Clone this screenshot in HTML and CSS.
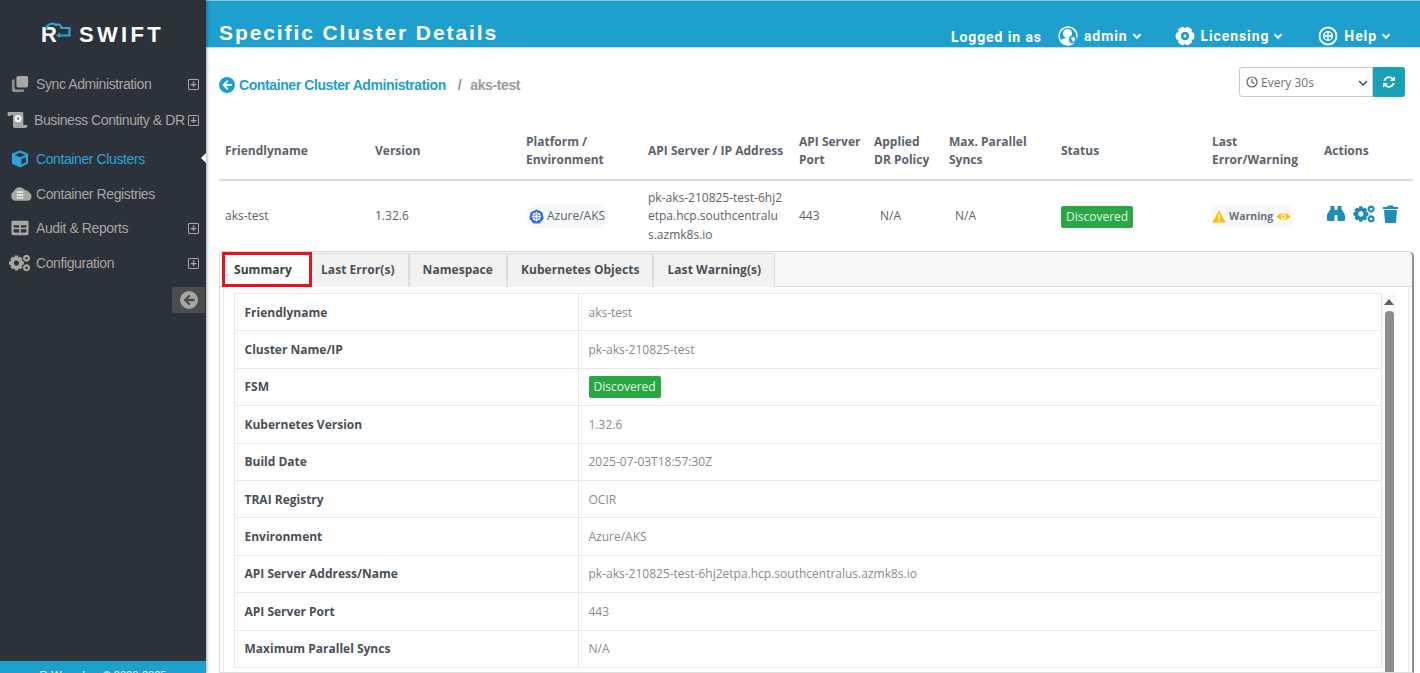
FILE: index.html
```html
<!DOCTYPE html>
<html lang="en">
<head>
    <meta charset="UTF-8">
    <title>Specific Cluster Details</title>
    <link rel="stylesheet" href="styles.css">
</head>
<body>
<div class="app">
    <aside class="sidebar">
        <div class="logo">
            <span class="logo-r">R</span>
            <svg class="logo-cloud" width="26" height="16" viewBox="0 0 26 16"><path d="M1 7 C2 2 8 0 11 3 C13 1.500 16 3 16.500 6 L24.500 6 V13.500 H13" fill="none" stroke="#2ba4d6" stroke-width="2.200"/><path d="M11 13.500 L15 10.500 V16 Z" fill="#2ba4d6"/></svg>
            <span class="logo-text">SWIFT</span>
        </div>
        <nav class="nav">
            <div class="nav-item nav-sync">
                <svg class="nav-icon" viewBox="0 0 20 20"><rect x="6" y="1" width="13" height="13" rx="2" fill="#a8a6a0"/><path d="M4 5 H2.500 A1.500 1.500 0 0 0 1 6.500 V17 A2 2 0 0 0 3 19 H13 A1.500 1.500 0 0 0 14.500 17.500 V16 H6 A2 2 0 0 1 4 14 Z" fill="#8f8d88"/></svg>
                <span class="nav-label">Sync Administration</span>
                <span class="plus">+</span>
            </div>
            <div class="nav-item nav-bc">
                <svg class="nav-icon wide" viewBox="0 0 22 20"><path d="M1 1 H16 A1.500 1.500 0 0 1 17.500 2.500 V15.500 H22 V17 A2 2 0 0 1 20 19 H8 A2 2 0 0 1 6 17 V4.500 H3.500 V5.500 H1 A1 1 0 0 1 0 4.500 V2 A1 1 0 0 1 1 1 Z" fill="#a8a6a0"/><circle cx="11.700" cy="8.500" r="4" fill="#f2f1ee"/><circle cx="11.700" cy="8.500" r="1.500" fill="#8f8d88"/></svg>
                <span class="nav-label">Business Continuity &amp; DR</span>
                <span class="plus">+</span>
            </div>
            <div class="nav-item nav-active nav-cc">
                <svg class="nav-icon" viewBox="0 0 20 20"><path d="M10 0.500 L19 4 V15 L10 19.500 L1 15 V4 Z" fill="#2ba4d6"/><path d="M4 5.500 L10 3 L16 5.500 L10 8 Z" fill="#2b323a"/><path d="M11.500 10 L16.500 8 V13.500 L11.500 16 Z" fill="#2b323a"/></svg>
                <span class="nav-label">Container Clusters</span>
                <span class="caret"></span>
            </div>
            <div class="nav-item nav-cr">
                <svg class="nav-icon cloud" viewBox="0 0 24 16"><path d="M6 15 H19 A4.500 4.500 0 0 0 21 6.500 A4 4 0 0 0 17 4 A7 7 0 0 0 5 5 A5.500 5.500 0 0 0 6 15 Z" fill="#a8a6a0"/><path d="M8 5 H15 V7 H8 Z M8 8 H15 V10 H8 Z M8 11 H15 V13 H8 Z" fill="#e6e4df"/></svg>
                <span class="nav-label">Container Registries</span>
            </div>
            <div class="nav-item nav-ar">
                <svg class="nav-icon" viewBox="0 0 20 18"><path fill-rule="evenodd" d="M2 1 H18 A1.500 1.500 0 0 1 19.500 2.500 V15.500 A1.500 1.500 0 0 1 18 17 H2 A1.500 1.500 0 0 1 0.500 15.500 V2.500 A1.500 1.500 0 0 1 2 1 Z M3 6 V8.500 H9 V6 Z M11 6 V8.500 H17 V6 Z M3 10.500 V14 H9 V10.500 Z M11 10.500 V14 H17 V10.500 Z" fill="#a8a6a0"/></svg>
                <span class="nav-label">Audit &amp; Reports</span>
                <span class="plus">+</span>
            </div>
            <div class="nav-item nav-cf">
                <svg class="nav-icon wide" viewBox="0 0 24 20"><use href="#gears" fill="#a8a6a0"/></svg>
                <span class="nav-label">Configuration</span>
                <span class="plus">+</span>
            </div>
        </nav>
        <div class="collapse-row">
            <div class="collapse-btn">
                <svg width="18" height="18" viewBox="0 0 18 18"><use href="#back-circle" fill="#a8a6a0"/></svg>
            </div>
        </div>
        <footer class="side-foot">R-Wave Inc. © 2020-2025</footer>
    </aside>

    <main class="main">
        <header class="topbar">
            <h1 class="page-title">Specific Cluster Details</h1>
            <div class="top-links">
                <span class="logged">Logged in as</span>
                <span class="top-link link-admin">
                    <svg width="20" height="20" viewBox="0 0 20 20"><circle cx="10" cy="10" r="9" fill="none" stroke="#fff" stroke-width="1.500"/><circle cx="9.500" cy="7.500" r="4.500" fill="#fff"/><path d="M2.500 15 C4 11.500 12 11 15 12.500 V18 H5 Z" fill="#fff"/><circle cx="15" cy="13.500" r="4" fill="#1da0ce"/><path d="M13 11.800 L15 11 L17 11.800 V14 C17 15 16 15.800 15 16.200 Z" fill="#fff"/></svg>
                    admin <span class="chev"></span>
                </span>
                <span class="top-link link-lic">
                    <svg width="20" height="20" viewBox="0 0 20 20"><circle cx="10" cy="10" r="9.500" fill="#fff"/><circle cx="10" cy="10" r="4.200" fill="#1da0ce"/><circle cx="10" cy="10" r="1.500" fill="#fff"/><g fill="#1da0ce"><circle cx="10" cy="0.500" r="1.600"/><circle cx="18.200" cy="5.200" r="1.600"/><circle cx="18.200" cy="14.800" r="1.600"/><circle cx="10" cy="19.500" r="1.600"/><circle cx="1.800" cy="14.800" r="1.600"/><circle cx="1.800" cy="5.200" r="1.600"/></g></svg>
                    Licensing <span class="chev"></span>
                </span>
                <span class="top-link link-help">
                    <svg width="20" height="20" viewBox="0 0 20 20"><circle cx="10" cy="10" r="8.500" fill="none" stroke="#fff" stroke-width="1.800"/><circle cx="10" cy="10" r="4.300" fill="none" stroke="#fff" stroke-width="1.500"/><path d="M10 5.500 V14.500 M5.500 10 H14.500" stroke="#fff" stroke-width="1.300"/></svg>
                    Help <span class="chev"></span>
                </span>
            </div>
        </header>

        <div class="crumb-row">
            <div class="crumbs">
                <svg width="16" height="16" viewBox="0 0 18 18"><use href="#back-circle" fill="#1da0ce"/></svg>
                <a class="crumb-link">Container Cluster Administration</a>
                <span class="crumb-sep">/</span>
                <span class="crumb-current">aks-test</span>
            </div>
            <div class="refresh">
                <div class="refresh-select">
                    <svg width="12" height="12" viewBox="0 0 12 12"><circle cx="6" cy="6" r="5" fill="none" stroke="#5f666d" stroke-width="1.200"/><path d="M6 3 V6.300 L8.200 7.500" fill="none" stroke="#5f666d" stroke-width="1.200"/></svg>
                    <span>Every 30s</span>
                    <svg class="select-arrow" width="10" height="6" viewBox="0 0 10 6"><path d="M1 1 L5 5 L9 1" fill="none" stroke="#4a5056" stroke-width="1.500"/></svg>
                </div>
                <button class="refresh-btn">
                    <svg width="14" height="14" viewBox="0 0 14 14"><path d="M1.500 6 A5.500 5.500 0 0 1 11 3 L12.800 1.200 V6 H8 L9.800 4.200 A3.800 3.800 0 0 0 3.400 6 Z M12.500 8 A5.500 5.500 0 0 1 3 11 L1.200 12.800 V8 H6 L4.200 9.800 A3.800 3.800 0 0 0 10.600 8 Z" fill="#fff"/></svg>
                </button>
            </div>
        </div>

        <table class="clusters">
            <thead>
                <tr>
                    <th class="c-name">Friendlyname</th>
                    <th class="c-ver">Version</th>
                    <th class="c-plat">Platform / Environment</th>
                    <th class="c-api">API Server / IP Address</th>
                    <th class="c-port">API Server Port</th>
                    <th class="c-dr">Applied DR Policy</th>
                    <th class="c-sync">Max. Parallel Syncs</th>
                    <th class="c-status">Status</th>
                    <th class="c-last">Last Error/Warning</th>
                    <th class="c-act">Actions</th>
                </tr>
            </thead>
            <tbody>
                <tr>
                    <td>aks-test</td>
                    <td>1.32.6</td>
                    <td>
                        <span class="platform">
                            <svg width="15" height="15" viewBox="0 0 16 16"><path d="M8 0.500 L14.200 3.500 L15.700 10.200 L11.400 15.500 H4.600 L0.300 10.200 L1.800 3.500 Z" fill="#326de6"/><circle cx="8" cy="8" r="3.800" fill="none" stroke="#fff" stroke-width="1.200"/><path d="M8 2.800 V13.200 M3 8 H13 M4.500 4.500 L11.500 11.500 M11.500 4.500 L4.500 11.500" stroke="#fff" stroke-width="0.900"/></svg>
                            Azure/AKS
                        </span>
                    </td>
                    <td class="api-cell">pk-aks-210825-test-6hj2etpa.hcp.southcentralus.azmk8s.io</td>
                    <td>443</td>
                    <td class="na">N/A</td>
                    <td class="na">N/A</td>
                    <td><span class="badge">Discovered</span></td>
                    <td>
                        <span class="warning">
                            <svg width="14" height="13" viewBox="0 0 14 13"><path d="M7 0.500 L13.800 12.500 H0.200 Z" fill="#ffc107"/><path d="M6.300 4.500 H7.700 V8.800 H6.300 Z M6.300 9.700 H7.700 V11 H6.300 Z" fill="#fff"/></svg>
                            <b>Warning</b>
                            <svg class="eye" width="15" height="11" viewBox="0 0 15 11"><path d="M0.500 5.500 C3 1 12 1 14.500 5.500 C12 10 3 10 0.500 5.500 Z" fill="#ffc107"/><circle cx="7.500" cy="5.500" r="2.600" fill="#fff"/><circle cx="7.500" cy="5.500" r="1.500" fill="#ffc107"/></svg>
                        </span>
                    </td>
                    <td>
                        <span class="actions">
                            <svg width="18" height="17" viewBox="0 0 18 17"><path d="M3.500 1 H7.500 V5 H10.500 V1 H14.500 V4 C15 6 18 8 18 11 V15 A1 1 0 0 1 17 16 H10.500 V10 H7.500 V16 H1 A1 1 0 0 1 0 15 V11 C0 8 3 6 3.500 4 Z" fill="#1c8dbb"/></svg>
                            <svg width="22" height="18" viewBox="0 0 24 20"><use href="#gears" fill="#1c8dbb"/></svg>
                            <svg width="15" height="18" viewBox="0 0 15 18"><path d="M5 0.500 H10 L11 2 H15 V4 H0 V2 H4 Z M1 5 H14 L13 17 A1 1 0 0 1 12 18 H3 A1 1 0 0 1 2 17 Z" fill="#1c8dbb"/></svg>
                        </span>
                    </td>
                </tr>
            </tbody>
        </table>

        <section class="panel">
            <div class="tabs">
                <span class="tab tab-active">Summary</span>
                <span class="tab">Last Error(s)</span>
                <span class="tab">Namespace</span>
                <span class="tab">Kubernetes Objects</span>
                <span class="tab">Last Warning(s)</span>
            </div>
            <div class="panel-body">
                <div class="summary-scroll">
                    <table class="summary">
                        <tr><th>Friendlyname</th><td>aks-test</td></tr>
                        <tr><th>Cluster Name/IP</th><td>pk-aks-210825-test</td></tr>
                        <tr><th>FSM</th><td><span class="badge">Discovered</span></td></tr>
                        <tr><th>Kubernetes Version</th><td>1.32.6</td></tr>
                        <tr><th>Build Date</th><td>2025-07-03T18:57:30Z</td></tr>
                        <tr><th>TRAI Registry</th><td>OCIR</td></tr>
                        <tr><th>Environment</th><td>Azure/AKS</td></tr>
                        <tr><th>API Server Address/Name</th><td>pk-aks-210825-test-6hj2etpa.hcp.southcentralus.azmk8s.io</td></tr>
                        <tr><th>API Server Port</th><td>443</td></tr>
                        <tr><th>Maximum Parallel Syncs</th><td>N/A</td></tr>
                    </table>
                </div>
                <div class="scrollbar">
                    <span class="scroll-up"></span>
                    <span class="scroll-thumb"></span>
                </div>
            </div>
        </section>
    </main>
</div>

<svg class="defs" width="0" height="0">
    <defs>
        <symbol id="back-circle" viewBox="0 0 18 18">
            <path fill-rule="evenodd" d="M9 0 A9 9 0 1 1 9 18 A9 9 0 1 1 9 0 Z M9.200 3.500 L3.700 9 L9.200 14.500 L10.700 13 L7.800 10.200 H14.500 V7.800 H7.800 L10.700 5 Z"/>
        </symbol>
        <symbol id="gears" viewBox="0 0 24 20">
            <path fill-rule="evenodd" d="M6.800 1.500 H10.200 L10.800 3.800 L13 2.900 L15.500 5.300 L14.500 7.500 L17 8.200 V11.800 L14.500 12.500 L15.500 14.700 L13 17.100 L10.800 16.200 L10.200 18.500 H6.800 L6.200 16.200 L4 17.100 L1.500 14.700 L2.500 12.500 L0 11.800 V8.200 L2.500 7.500 L1.500 5.300 L4 2.900 L6.200 3.800 Z M8.500 7 A3 3 0 1 0 8.501 7 Z"/>
            <path fill-rule="evenodd" d="M20 0.500 A4 4 0 1 1 19.999 0.500 Z M20 3 A1.500 1.500 0 1 0 20.001 3 Z M20 11.500 A4 4 0 1 1 19.999 11.500 Z M20 14 A1.500 1.500 0 1 0 20.001 14 Z"/>
        </symbol>
    </defs>
</svg>
</body>
</html>
```

FILE: styles.css
```css
* {
    box-sizing: border-box;
}
html, body {
    height: 100%;
}
body {
    margin: 0;
    overflow: hidden;
    font-family: "Open Sans", sans-serif;
    font-size: 12px;
    color: #5c636a;
    background-color: #fff;
}
.defs {
    position: absolute;
}
.app {
    display: flex;
    height: 673px;
    overflow: hidden;
}

/* sidebar */
.sidebar {
    width: 206px;
    flex-shrink: 0;
    display: flex;
    flex-direction: column;
    background-color: #2b323a;
    box-shadow: 1px 0 3px rgba(0,0,0,0.35);
    font-family: "Liberation Sans", Arial, sans-serif;
    position: relative;
    z-index: 2;
}
.logo {
    height: 66px;
    padding: 3px 0 0 41px;
    display: flex;
    align-items: center;
    color: #fff;
    font-weight: bold;
    font-size: 22px;
}
.logo-r {
    width: 15px;
}
.logo-cloud {
    margin: -10px 0 0 -11px;
    flex-shrink: 0;
}
.logo-text {
    margin-left: 8px;
    letter-spacing: 3.300px;
}
.nav-item {
    display: flex;
    align-items: center;
    height: 35px;
    padding-left: 11px;
    font-size: 14px;
    letter-spacing: -0.4px;
    color: #a8a6a0;
    position: relative;
}
.nav-bc {
    margin-top: 1px;
    padding-left: 7px;
}
.nav-cc {
    margin-top: 4px;
}
.nav-ar {
    margin-top: -1px;
}
.nav-icon {
    width: 18px;
    height: 18px;
    margin-right: 7px;
    flex-shrink: 0;
}
.nav-icon.wide {
    width: 21px;
    margin-left: -2px;
    margin-right: 6px;
}
.nav-icon.cloud {
    width: 23px;
    margin-left: -2px;
    margin-right: 4px;
}
.nav-bc .nav-icon.wide {
    margin-left: 0;
}
.nav-active {
    color: #2ba4d6;
}
.plus {
    position: absolute;
    right: 7px;
    top: 13px;
    width: 11px;
    height: 11px;
    border: 1px solid #a8a6a0;
    border-radius: 1px;
    font-size: 11px;
    line-height: 9px;
    text-align: center;
    letter-spacing: 0;
    font-weight: bold;
}
.caret {
    position: absolute;
    right: 0;
    top: 12px;
    border-top: 5px solid transparent;
    border-bottom: 5px solid transparent;
    border-right: 5px solid #fff;
}
.collapse-row {
    display: flex;
    justify-content: flex-end;
    margin-top: 7px;
    padding-right: 1px;
}
.collapse-btn {
    width: 33px;
    height: 26px;
    background-color: #4a4d50;
    border-radius: 4px 0 0 4px;
    display: flex;
    align-items: center;
    justify-content: center;
}
.side-foot {
    margin-top: auto;
    height: 12px;
    padding-top: 7px;
    background-color: #1da0ce;
    color: #e8f4f9;
    font-size: 11px;
    line-height: 14px;
    text-align: center;
    overflow: hidden;
}

/* main */
.main {
    flex: 1;
    min-width: 0;
    display: flex;
    flex-direction: column;
}
.topbar {
    height: 48px;
    flex-shrink: 0;
    display: flex;
    align-items: flex-end;
    justify-content: space-between;
    background-color: #1da0ce;
    border-top: 1px solid #8fc3cf;
    border-bottom: 1px solid #bfe0ec;
    padding: 0 31px 1px 13px;
    color: #fff;
}
.page-title {
    margin: 0;
    font-family: "Liberation Sans", Arial, sans-serif;
    font-size: 21px;
    line-height: 27px;
    font-weight: bold;
    letter-spacing: 1.9px;
}
.top-links {
    display: flex;
    align-items: center;
    height: 20px;
    font-family: Roboto, sans-serif;
    font-weight: 700;
    font-size: 14px;
    letter-spacing: 0.9px;
}
.logged {
    margin: 1px 16px 0 0;
}
.top-link {
    display: flex;
    align-items: center;
    gap: 6px;
}
.link-lic {
    margin-left: 35px;
}
.link-help {
    margin-left: 37px;
}
.chev {
    width: 6px;
    height: 6px;
    border-right: 2px solid #fff;
    border-bottom: 2px solid #fff;
    transform: rotate(45deg);
    margin: -3px 0 0 0;
}

.crumb-row {
    height: 63px;
    flex-shrink: 0;
    display: flex;
    align-items: flex-start;
    justify-content: space-between;
    padding: 19px 15px 0 13px;
}
.crumbs {
    display: flex;
    align-items: center;
    height: 38px;
    margin-top: -1px;
    font-family: "Liberation Sans", Arial, sans-serif;
    font-weight: bold;
    font-size: 14px;
    letter-spacing: -0.4px;
}
.crumb-link {
    color: #1da0ce;
    margin-left: 4px;
}
.crumb-sep {
    color: #8f9499;
    margin-left: 12px;
}
.crumb-current {
    color: #9a9a9a;
    margin-left: 9px;
}
.refresh {
    display: flex;
    height: 30px;
}
.refresh-select {
    width: 134px;
    display: flex;
    align-items: center;
    gap: 3px;
    padding-left: 6px;
    border: 1px solid #ccc;
    border-radius: 3px 0 0 3px;
    position: relative;
    font-size: 12px;
    color: #6b7177;
}
.select-arrow {
    position: absolute;
    right: 4px;
    top: 12px;
}
.refresh-btn {
    width: 32px;
    border: none;
    border-radius: 0 3px 3px 0;
    background-color: #17a2b8;
    padding: 0;
    display: flex;
    align-items: center;
    justify-content: center;
}

/* cluster table */
.clusters {
    margin: 0 7px 0 13px;
    width: 1194px;
    border-collapse: collapse;
    table-layout: fixed;
    flex-shrink: 0;
}
.clusters th {
    height: 69px;
    padding: 12px 6px 0;
    text-align: left;
    font-size: 12px;
    line-height: 18px;
    font-weight: 700;
    color: #5c636a;
    border-bottom: 2px solid #dcdcdc;
}
.clusters td {
    height: 70px;
    padding: 2px 6px 0;
    line-height: 18.500px;
    vertical-align: middle;
    color: #5c636a;
}
.c-name { width: 150px; }
.c-ver { width: 151px; }
.c-plat { width: 122px; }
.c-api { width: 151px; }
.c-port { width: 75px; }
.c-dr { width: 75px; }
.c-sync { width: 112px; }
.c-status { width: 151px; }
.c-last { width: 112px; }
.c-act { width: 95px; }
.clusters .api-cell {
    word-break: break-all;
    padding-right: 10px;
}
.clusters .na {
    padding-left: 12px;
}
.platform {
    display: inline-flex;
    align-items: center;
    gap: 3px;
    height: 24px;
    padding: 0 3px;
    border-radius: 10px;
    background-color: #f8f9fb;
}
.badge {
    display: inline-block;
    padding: 0 5px;
    height: 22px;
    line-height: 22px;
    background-color: #28a745;
    color: #e6f5e6;
    border-radius: 2px;
    font-size: 12px;
}
.warning {
    display: inline-flex;
    align-items: center;
    gap: 3px;
    height: 22px;
    width: 82px;
    border-radius: 3px;
    background-color: #f8f9fb;
    font-size: 10.500px;
    color: #6a7076;
}
.eye {
    margin-left: 0;
}
.actions {
    display: inline-flex;
    align-items: center;
    gap: 8px;
    margin: 0 0 6px 3px;
    vertical-align: middle;
}

/* detail panel */
.panel {
    flex: 1;
    min-height: 0;
    margin: 1px 6px 0 13px;
    border: 1px solid #ddd;
    border-top-color: #d5d5d5;
    border-right: 2px solid #8e9194;
    border-radius: 4px 6px 0 0;
    display: flex;
    flex-direction: column;
    overflow: hidden;
}
.tabs {
    height: 35px;
    flex-shrink: 0;
    display: flex;
    align-items: flex-end;
    padding-left: 2px;
    background-color: #f7f7f7;
    border-bottom: 1px solid #ddd;
}
.tab {
    height: 34px;
    display: flex;
    align-items: center;
    padding: 0 13px 2px;
    margin-bottom: -1px;
    font-weight: 700;
    font-size: 12px;
    letter-spacing: 0.05px;
    color: #4a5056;
    background-color: #f2f2f2;
    border: 1px solid #ddd;
    border-bottom: none;
    border-radius: 2px 2px 0 0;
}
.tab-active {
    width: 90px;
    height: 35px;
    padding: 0 9px;
    margin-right: -5px;
    background-color: #fff;
    border: 3px solid #e6141e;
    border-radius: 0;
    color: #3b4046;
    position: relative;
    z-index: 1;
}
.panel-body {
    flex: 1;
    min-height: 0;
    display: flex;
    margin: 0 3px;
    padding: 6px 0 0 10px;
    border-left: 1px solid #e8e8e8;
    border-right: 1px solid #e8e8e8;
}
.summary-scroll {
    flex: 1;
    min-width: 0;
}
.summary {
    width: 100%;
    border-collapse: collapse;
    border: 1px solid #e8e8e8;
}
.summary th, .summary td {
    height: 37.400px;
    padding: 0 9.500px;
    border: 1px solid #e8e8e8;
    text-align: left;
}
.summary th {
    width: 344px;
    font-weight: 700;
    color: #4a5056;
}
.summary td {
    color: #868b90;
}
.scrollbar {
    width: 14px;
    flex-shrink: 0;
    padding-top: 6px;
    display: flex;
    flex-direction: column;
    align-items: center;
    background-color: #fafafa;
    margin-right: 12px;
}
.scroll-up {
    border-left: 5px solid transparent;
    border-right: 5px solid transparent;
    border-bottom: 6px solid #5f5f5f;
}
.scroll-thumb {
    width: 9px;
    flex: 1;
    margin-top: 6px;
    background-color: #8c8c8c;
    border-radius: 4px 4px 0 0;
}
```
